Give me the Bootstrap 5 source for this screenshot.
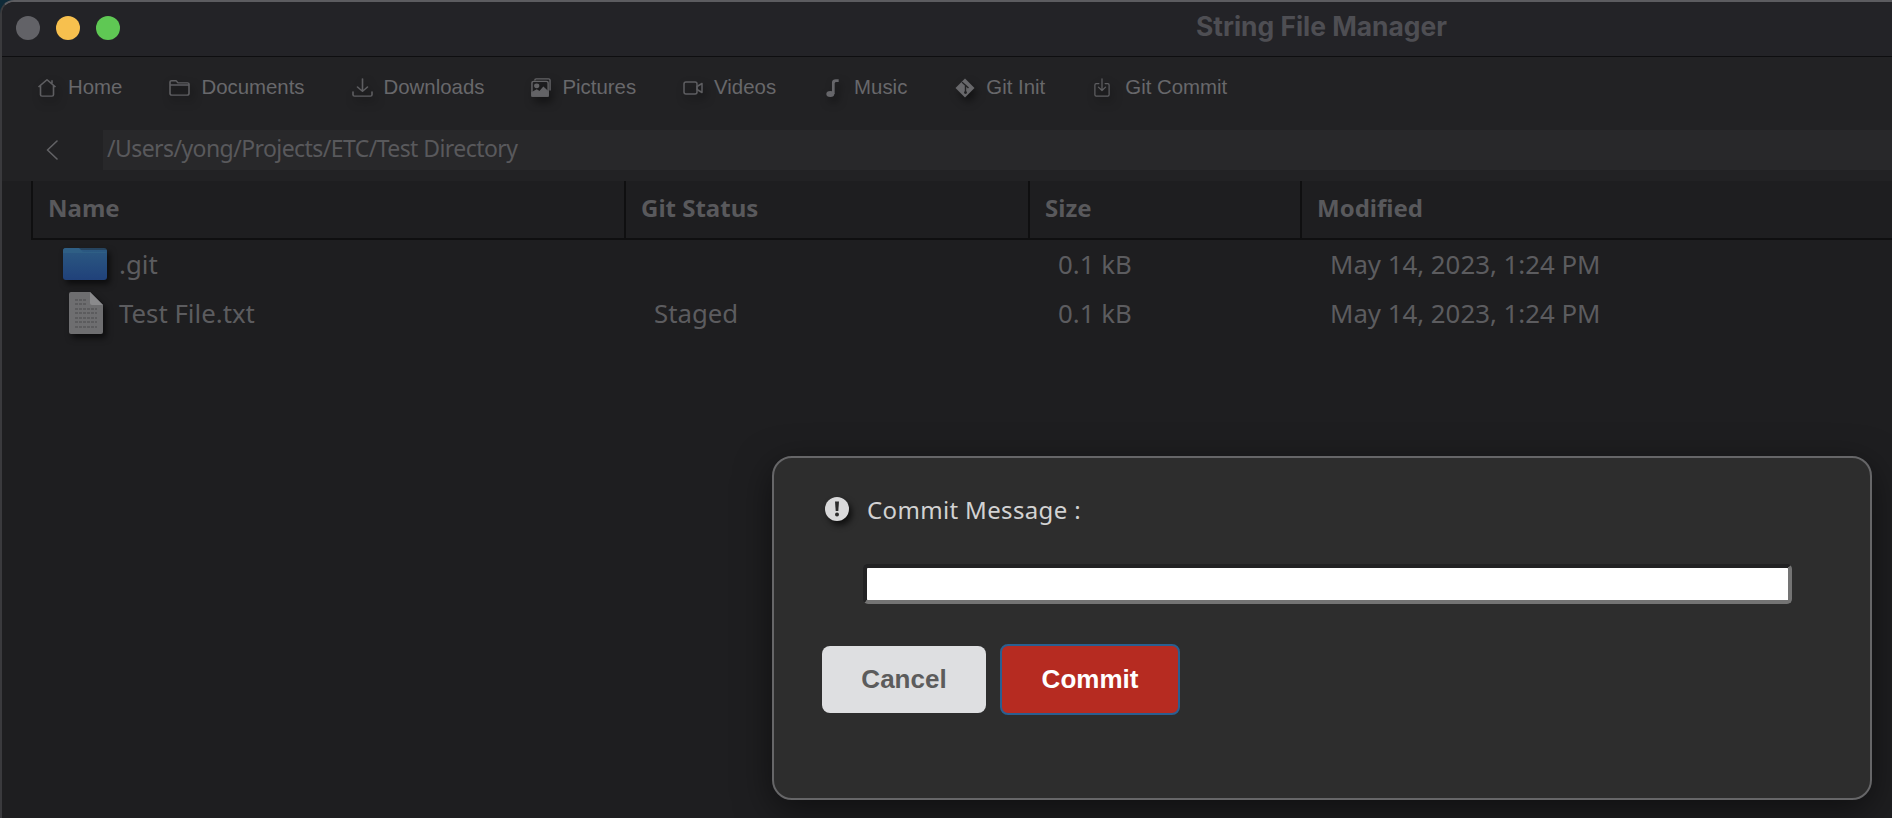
<!DOCTYPE html>
<html lang="en">
<head>
  <meta charset="UTF-8">
  <title>String File Manager</title>
  <link href="https://cdn.jsdelivr.net/npm/bootstrap@5.3.3/dist/css/bootstrap.min.css" rel="stylesheet">
  <style>
    html, body { margin: 0; height: 100%; background: #0f2a38; overflow: hidden; }

    .app-window {
      height: 818px;
      background: #1e1e20;
      border-left: 2px solid #3a3a3d;
      border-top: 2px solid #5c5c60;
      border-top-left-radius: 14px;
      overflow: hidden;
      position: relative;
    }

    .title-bar {
      height: 55px;
      background: #232327;
      border-bottom: 1px solid #0e0e10;
    }
    .traffic { width: 24px; height: 24px; border-radius: 50%; }
    .traffic-close { background: #626267; }
    .traffic-min { background: #f7c04e; }
    .traffic-max { background: #5fc854; }
    .traffic-row { gap: 16px; padding-left: 14px; padding-bottom: 2px; }
    .app-title {
      font: 700 26.4px "Inter", sans-serif;
      color: #4e4e53;
      position: absolute;
      left: 1194px;
      top: 9px;
      line-height: 30px;
    }

    .top-area { background: #222224; height: 124px; }
    .tool-row { height: 61px; padding-left: 35px; gap: 47px; }
    .tool-item {
      font: 20.4px "Liberation Sans", Arial, sans-serif;
      color: #68686b;
      gap: 11px;
    }
    .tool-item svg { filter: drop-shadow(3px 5px 4px rgba(0,0,0,.5)); flex: none; }
    .tool-gap-wide { gap: 15px; padding-left: 3px; }
    .tool-gap-init { padding-left: 1px; }
    .tool-gap-mid { gap: 15px; padding-left: 2px; }

    .path-row { height: 40px; margin-top: 12px; }
    .back-btn { width: 101px; padding-left: 44px; }
    .path-box {
      background: #28282a;
      font: 23px "Noto Sans", sans-serif;
      letter-spacing: -.57px;
      color: #59595c;
      line-height: 36px;
      padding-left: 4px;
    }

    .file-table { margin-left: 29px; width: 1861px; table-layout: fixed; --bs-table-bg: transparent; margin-bottom: 0; }
    .file-table th {
      height: 58px;
      font: 700 24px "Noto Sans", sans-serif;
      color: #59595c;
      padding: 0 0 4px 15px;
      vertical-align: middle;
      border-left: 2px solid #0f0f10;
      border-bottom: 2px solid #0f0f10;
    }
    .file-table td {
      height: 49px;
      font: 25.8px "Noto Sans", sans-serif;
      color: #5c5c5f;
      padding: 0 0 0 29px;
      vertical-align: middle;
      border: 0;
    }
    .col-name { width: 593px; }
    .col-git { width: 404px; }
    .col-size { width: 272px; }
    .file-table td.name-cell { padding-left: 0; }
    .name-wrap { gap: 12px; }
    .icon-slot { width: 75px; flex: none; }
    .icon-slot svg { filter: drop-shadow(3px 4px 3px rgba(0,0,0,.6)); }

    .commit-dialog {
      position: absolute;
      left: 770px;
      top: 454px;
      width: 1100px;
      height: 344px;
      background: #2d2d2d;
      border: 2px solid #666668;
      border-radius: 20px;
      padding: 35px 0 0 51px;
      box-shadow: 0 10px 36px rgba(0,0,0,.5);
    }
    .dialog-head { gap: 18px; height: 32px; font: 24px "Noto Sans", sans-serif; color: #d2d2d2; letter-spacing: .35px; }
    .dialog-head svg { filter: drop-shadow(3px 4px 3px rgba(0,0,0,.7)); }
    .commit-input {
      display: block;
      width: 929px;
      height: 40px;
      margin: 39px 0 0 38px;
      background: #fff;
      border: 4px solid;
      border-color: #222223 #747474 #747474 #222223;
      border-radius: 5px;
      padding: 0 6px;
    }
    .dialog-actions { gap: 14px; margin: 40px 0 0 -3px; }
    .dialog-btn {
      font: 700 26px "Liberation Sans", Arial, sans-serif;
      border-radius: 8px;
      padding: 0;
    }
    .btn-cancel { width: 164px; height: 67px; background: #dedfe1; color: #5c5c5c; border: 0; }
    .btn-commit { width: 180px; height: 71px; background: #b62b21; color: #fff; border: 2px solid #2a5f91; }
  </style>
</head>
<body>
  <div class="app-window d-flex flex-column">
    <div class="title-bar d-flex align-items-center traffic-row flex-shrink-0">
      <div class="traffic traffic-close"></div>
      <div class="traffic traffic-min"></div>
      <div class="traffic traffic-max"></div>
    </div>
    <div class="app-title">String File Manager</div>

    <div class="top-area flex-shrink-0">
      <div class="tool-row d-flex align-items-center">
        <div class="tool-item d-flex align-items-center">
          <svg width="20" height="19" viewBox="0 0 20 22" preserveAspectRatio="none" fill="none" stroke="#5e5e61" stroke-width="1.6" stroke-linejoin="round"><path d="M1.5 10.5 10 2l8.500 8.500M3.500 9v10.500a1.500 1.500 0 0 0 1.500 1.500h10a1.500 1.500 0 0 0 1.500-1.500V9M15 2.500V6"/></svg>
          <span>Home</span>
        </div>
        <div class="tool-item d-flex align-items-center">
          <svg width="21" height="17" viewBox="0 0 21 20" preserveAspectRatio="none" fill="none" stroke="#5e5e61" stroke-width="1.600" stroke-linejoin="round"><path d="M1 17V3.500A1.500 1.500 0 0 1 2.500 2H7l2 2.500h9.500A1.500 1.500 0 0 1 20 6v11a2 2 0 0 1-2 2H3a2 2 0 0 1-2-2ZM1 7h19"/></svg>
          <span>Documents</span>
        </div>
        <div class="tool-item d-flex align-items-center">
          <svg width="21" height="19" viewBox="0 0 21 22" preserveAspectRatio="none" fill="none" stroke="#5e5e61" stroke-width="1.600" stroke-linecap="round" stroke-linejoin="round"><path d="M10.500 1v14M5.500 10.500l5 5 5-5M1 16v3.500A1.500 1.500 0 0 0 2.500 21h16a1.500 1.500 0 0 0 1.500-1.500V16"/></svg>
          <span>Downloads</span>
        </div>
        <div class="tool-item d-flex align-items-center">
          <svg width="20" height="19" viewBox="0 0 21 22" preserveAspectRatio="none" fill="none" stroke="#636366" stroke-width="1.500"><path d="M4 3V2.500A1.500 1.500 0 0 1 5.500 1h13A1.500 1.500 0 0 1 20 2.500v12"/><rect x="1" y="4" width="17" height="17" rx="2"/><circle cx="6" cy="9" r="2" fill="#636366"/><path d="M1 21v-4l5-3 3 2 4-5 5 5v5z" fill="#636366"/></svg>
          <span>Pictures</span>
        </div>
        <div class="tool-item d-flex align-items-center">
          <svg width="20" height="14" viewBox="0 0 20 14" fill="none" stroke="#5e5e61" stroke-width="1.500" stroke-linejoin="round"><rect x="1" y="1" width="13" height="12" rx="2"/><path d="m14 5.500 5-3v9l-5-3z"/></svg>
          <span>Videos</span>
        </div>
        <div class="tool-item d-flex align-items-center tool-gap-wide">
          <svg width="13" height="18" viewBox="0 0 12 18" preserveAspectRatio="none" fill="#66666a"><ellipse cx="4" cy="15" rx="3.700" ry="3"/><path d="M5.500 15V3.500C5.500 1.200 7 .3 9 .3h2.700v2.600H9.800C8.500 2.900 8 3.400 8 4.500V15z"/></svg>
          <span>Music</span>
        </div>
        <div class="tool-item d-flex align-items-center tool-gap-init">
          <svg width="20" height="20" viewBox="0 0 20 22" preserveAspectRatio="none"><path d="M10 0.500 19.500 11 10 21.500.5 11z" fill="#68686b"/><path d="M7 4.500 10.500 8v8M10.500 8l3 3" stroke="#232325" stroke-width="1.400" fill="none"/><circle cx="10.500" cy="16" r="1.500" fill="#232325"/></svg>
          <span>Git Init</span>
        </div>
        <div class="tool-item d-flex align-items-center tool-gap-mid">
          <svg width="16" height="19" viewBox="0 0 18 22" preserveAspectRatio="none" fill="none" stroke="#5e5e61" stroke-width="1.400" stroke-linecap="round" stroke-linejoin="round"><path d="M5.500 6.500H2.500A1.500 1.500 0 0 0 1 8v11.500A1.500 1.500 0 0 0 2.500 21h13a1.500 1.500 0 0 0 1.500-1.500V8a1.500 1.500 0 0 0-1.500-1.500h-3M9 1v13.500M5 10.500l4 4 4-4"/></svg>
          <span>Git Commit</span>
        </div>
      </div>
      <div class="path-row d-flex">
        <div class="back-btn d-flex align-items-center">
          <svg width="12" height="20" viewBox="0 0 12 20" fill="none" stroke="#626265" stroke-width="1.600" stroke-linecap="round" stroke-linejoin="round"><path d="M11 1 1.500 10 11 19"/></svg>
        </div>
        <div class="path-box flex-grow-1">/Users/yong/Projects/ETC/Test Directory</div>
      </div>
    </div>

    <div>
      <table class="table file-table">
        <thead>
          <tr>
            <th class="col-name">Name</th>
            <th class="col-git">Git Status</th>
            <th class="col-size">Size</th>
            <th>Modified</th>
          </tr>
        </thead>
        <tbody>
          <tr>
            <td class="name-cell">
              <div class="d-flex align-items-center name-wrap">
                <div class="icon-slot d-flex justify-content-end">
                  <svg width="44" height="32" viewBox="0 0 44 32">
                    <defs><linearGradient id="fold" x1="0" y1="0" x2="0" y2="1"><stop offset="0" stop-color="#2c5a82"/><stop offset="1" stop-color="#20417a"/></linearGradient></defs>
                    <rect y="0" width="44" height="32" rx="3" fill="url(#fold)"/>
                    <path d="M0 5V3a3 3 0 0 1 3-3h13l4 4h21a3 3 0 0 1 3 1z" fill="#2f5f85"/>
                    <path d="M16 0h28v2H18z" fill="#1e1e20" opacity=".35"/>
                  </svg>
                </div>
                <span>.git</span>
              </div>
            </td>
            <td></td>
            <td>0.1 kB</td>
            <td>May 14, 2023, 1:24 PM</td>
          </tr>
          <tr>
            <td class="name-cell">
              <div class="d-flex align-items-center name-wrap">
                <div class="icon-slot d-flex justify-content-end">
                  <svg width="34" height="42" viewBox="0 0 34 42" class="me-1">
                    <path d="M2 0h19l13 13v27a2 2 0 0 1-2 2H2a2 2 0 0 1-2-2V2a2 2 0 0 1 2-2z" fill="#6e6e70"/>
                    <path d="M21 0v11a2 2 0 0 0 2 2h11z" fill="#8a8a8c"/>
                    <path d="M6 8h11M6 12h11M6 17h22M6 21h22M6 26h22M6 30h22M6 35h22" stroke="#5c5c5e" stroke-width="2.200" stroke-dasharray="3 1"/>
                  </svg>
                </div>
                <span>Test File.txt</span>
              </div>
            </td>
            <td>Staged</td>
            <td>0.1 kB</td>
            <td>May 14, 2023, 1:24 PM</td>
          </tr>
        </tbody>
      </table>
    </div>

    <div class="commit-dialog card">
      <div class="dialog-head d-flex align-items-center flex-row">
        <svg width="24" height="24" viewBox="0 0 24 24"><circle cx="12" cy="12" r="12" fill="#d9d9da"/><path d="M10 4.500h4l-.7 9.500h-2.600z" fill="#2b2b2b"/><circle cx="12" cy="17.500" r="2" fill="#2b2b2b"/></svg>
        <span>Commit Message :</span>
      </div>
      <input class="commit-input" type="text" aria-label="Commit Message">
      <div class="dialog-actions d-flex align-items-center">
        <button class="btn dialog-btn btn-cancel" type="button">Cancel</button>
        <button class="btn dialog-btn btn-commit" type="button">Commit</button>
      </div>
    </div>
  </div>

  <script src="https://cdn.jsdelivr.net/npm/bootstrap@5.3.3/dist/js/bootstrap.bundle.min.js"></script>
</body>
</html>
